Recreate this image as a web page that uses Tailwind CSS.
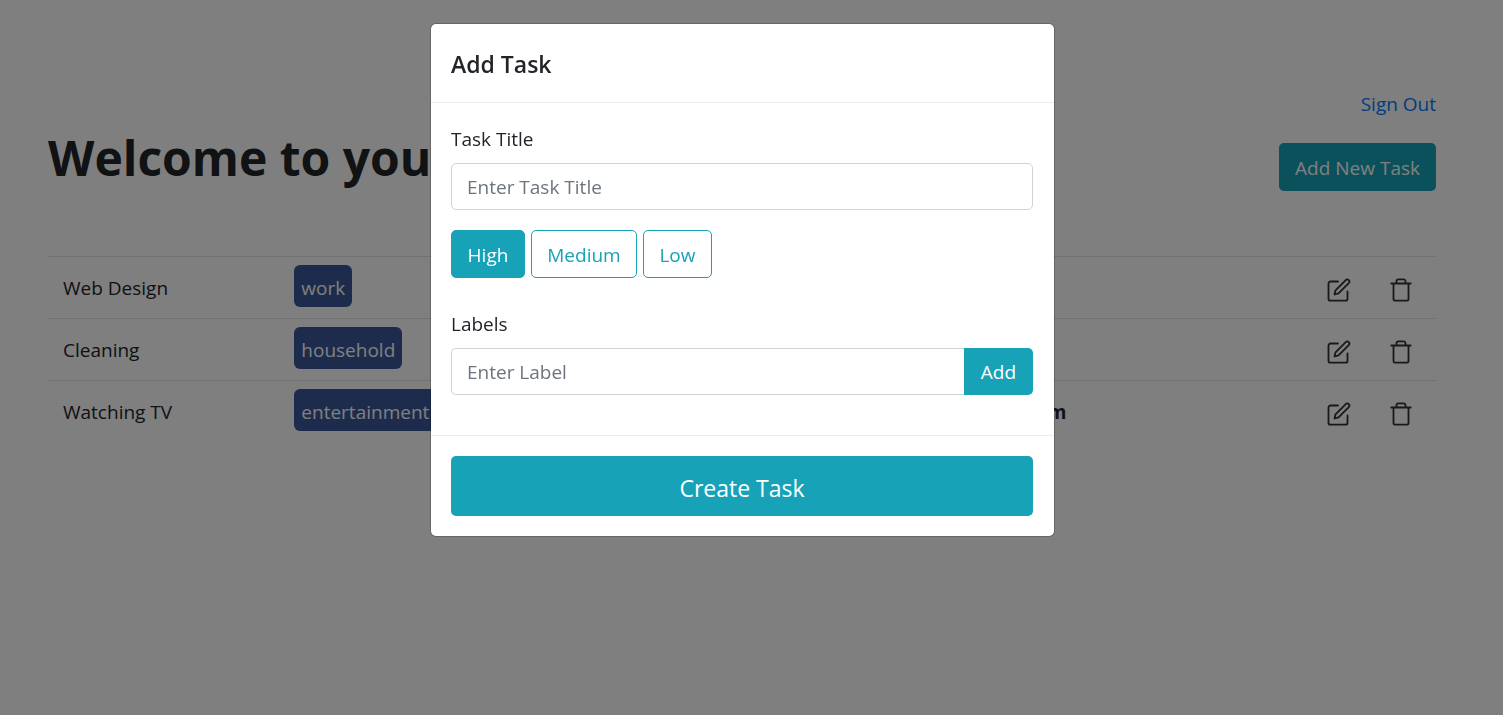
<!DOCTYPE html>
<html lang="en">
<head>
<meta charset="utf-8">
<title>Tasks</title>
<script src="https://cdn.jsdelivr.net/npm/@tailwindcss/browser@4"></script>
</head>
<body class="min-h-screen bg-[#fefefe] font-['Open_Sans','Noto_Sans',sans-serif] text-[19px] leading-[30px] text-[#212529]">
<svg class="hidden">
  <symbol id="edit" viewBox="0 0 24 24" fill="none" stroke="currentColor" stroke-width="1.800" stroke-linecap="round" stroke-linejoin="round">
    <path d="M11 3.500H3.500A2 2 0 0 0 1.500 5.500V20.700A2 2 0 0 0 3.500 22.700H18.500A2 2 0 0 0 20.500 20.700V13.500"/>
    <path d="M19 1.800a2.150 2.150 0 0 1 3 3L11.500 15.300l-4 1.200 1-4.200z"/>
  </symbol>
  <symbol id="trash" viewBox="0 0 22 24" fill="none" stroke="currentColor" stroke-width="1.800" stroke-linecap="round" stroke-linejoin="round">
    <path d="M1.300 5.500h19.400M3.500 5.500V21a1.600 1.600 0 0 0 1.600 1.600h11.800a1.600 1.600 0 0 0 1.600-1.600V5.500M6.500 5.500V3.300a1.900 1.900 0 0 1 1.900-1.900h5.200a1.900 1.900 0 0 1 1.900 1.900v2.200"/>
  </symbol>
</svg>

<main class="pt-[89px] pr-[67px] pl-12">
  <div class="flex justify-end"><a href="#" class="text-[#007bff]">Sign Out</a></div>
  <header class="mt-6 flex items-start justify-between">
    <h1 class="-mt-[15px] text-[48px] leading-[60px] font-bold">Welcome to your Tasks</h1>
    <button class="h-12 rounded-[5px] bg-[#17a2b8] px-4 pt-px text-white">Add New Task</button>
  </header>
  <table class="mt-[65px] w-full table-fixed">
    <colgroup><col class="w-1/6"><col class="w-1/2"><col class="w-1/6"><col class="w-1/6"></colgroup>
    <tbody>
      <tr class="h-[62px] border-t border-[#dee2e6]">
        <td class="px-[15px]">Web Design</td>
        <td class="px-[15px]"><div class="-mt-1 flex"><span class="h-[42px] rounded-[6px] bg-[#3b5998] px-[7px] pt-2 text-white">work</span></div></td>
        <td class="px-[15px] font-bold"></td>
        <td><div class="flex justify-end gap-[39px] pt-1 pr-6 text-[#333]"><button aria-label="Edit Web Design"><svg class="h-6 w-6"><use href="#edit"/></svg></button><button aria-label="Delete Web Design"><svg class="h-6 w-[22px]"><use href="#trash"/></svg></button></div></td>
      </tr>
      <tr class="h-[62px] border-t border-[#dee2e6]">
        <td class="px-[15px]">Cleaning</td>
        <td class="px-[15px]"><div class="-mt-1 flex"><span class="h-[42px] rounded-[6px] bg-[#3b5998] px-[7px] pt-2 text-white">household</span></div></td>
        <td class="px-[15px] font-bold"></td>
        <td><div class="flex justify-end gap-[39px] pt-1 pr-6 text-[#333]"><button aria-label="Edit Cleaning"><svg class="h-6 w-6"><use href="#edit"/></svg></button><button aria-label="Delete Cleaning"><svg class="h-6 w-[22px]"><use href="#trash"/></svg></button></div></td>
      </tr>
      <tr class="h-[62px] border-t border-[#dee2e6]">
        <td class="px-[15px]">Watching TV</td>
        <td class="px-[15px]"><div class="-mt-1 flex"><span class="h-[42px] rounded-[6px] bg-[#3b5998] px-[7px] pt-2 text-white">entertainment</span></div></td>
        <td class="px-[15px] font-bold">Medium</td>
        <td><div class="flex justify-end gap-[39px] pt-1 pr-6 text-[#333]"><button aria-label="Edit Watching TV"><svg class="h-6 w-6"><use href="#edit"/></svg></button><button aria-label="Delete Watching TV"><svg class="h-6 w-[22px]"><use href="#trash"/></svg></button></div></td>
      </tr>
    </tbody>
  </table>
</main>

<div class="fixed inset-0 bg-black/50 pt-6 pr-[18px]">
  <form role="dialog" aria-labelledby="dialog-title" class="mx-auto w-full max-w-[623px] rounded-[5px] bg-white shadow-[0_0_0_1px_rgba(0,0,0,0.2)]">
    <div class="border-b border-[#e9ecef] px-5 pt-[21px] pb-[19px]">
      <h2 id="dialog-title" class="text-[23px] leading-[38px] font-semibold">Add Task</h2>
    </div>
    <div class="pt-[21px] pr-[21px] pb-10 pl-5">
      <label for="task-title" class="block">Task Title</label>
      <input id="task-title" type="text" placeholder="Enter Task Title" class="mt-[9px] block h-[47px] w-full rounded-[5px] border border-[#ced4da] px-[15px] placeholder:text-[#6c757d]">
      <div class="mt-5 flex gap-[6px]">
        <button type="button" aria-pressed="true" class="h-12 w-[74px] rounded-[5px] border border-[#17a2b8] bg-[#17a2b8] pt-px text-white">High</button>
        <button type="button" class="h-12 w-[106px] rounded-[5px] border border-[#17a2b8] pt-px text-[#17a2b8]">Medium</button>
        <button type="button" class="h-12 w-[69px] rounded-[5px] border border-[#17a2b8] pt-px text-[#17a2b8]">Low</button>
      </div>
      <label for="task-label" class="mt-[31px] block">Labels</label>
      <div class="mt-[9px] flex h-[47px]">
        <input id="task-label" type="text" placeholder="Enter Label" class="min-w-0 flex-1 rounded-l-[5px] border border-r-0 border-[#ced4da] px-[15px] placeholder:text-[#6c757d]">
        <button type="button" class="w-[69px] rounded-r-[5px] bg-[#17a2b8] text-white">Add</button>
      </div>
    </div>
    <div class="border-t border-[#e9ecef] py-5 pr-[21px] pl-5">
      <button type="submit" class="h-[60px] w-full rounded-[5px] bg-[#17a2b8] pt-1 text-[23px] text-white">Create Task</button>
    </div>
  </form>
</div>
</body>
</html>
